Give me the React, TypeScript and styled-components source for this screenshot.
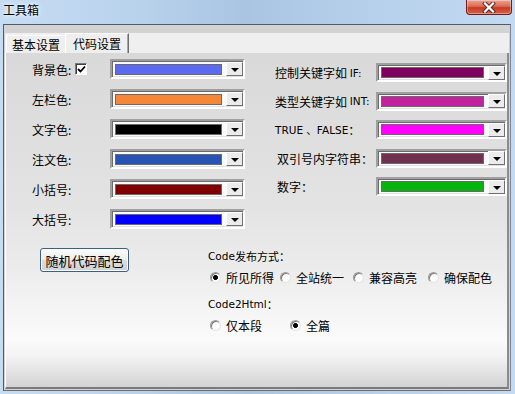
import React from 'react';
import styled, { createGlobalStyle } from 'styled-components';

const GlobalStyle = createGlobalStyle`
  html, body {
    margin: 0;
    padding: 0;
    background: #bcd4ee;
  }
  * {
    box-sizing: border-box;
  }
`;

const cjk = `'Noto Sans CJK SC', 'DejaVu Sans', sans-serif`;
const latin = `'DejaVu Sans', 'Noto Sans CJK SC', sans-serif`;

const Window = styled.div`
  width: 515px;
  height: 394px;
  display: flex;
  flex-direction: column;
  padding: 0 4px 3px 3px;
  background: linear-gradient(90deg, #c6dcf3 0%, #bad3ed 25%, #a9c5e2 48%, #b3cde9 65%, #c3daf2 100%);
  font-family: ${cjk};
  font-size: 12px;
  color: #000;
`;

const TitleBar = styled.div`
  height: 24px;
  flex: none;
  display: flex;
  align-items: flex-start;
  justify-content: space-between;
`;

const Title = styled.span`
  font-size: 12px;
  line-height: 14px;
  margin-top: 3px;
  text-shadow: 0 0 6px #fff, 0 0 3px #fff;
`;

const CloseButton = styled.div`
  width: 46px;
  height: 15px;
  margin-right: -1px;
  border: 1px solid #6b1f17;
  border-top: none;
  border-radius: 0 0 4px 4px;
  background: linear-gradient(#eba493 0%, #dc6b54 45%, #c83a22 55%, #d8604a 100%);
  box-shadow: inset 0 0 0 1px rgba(255, 255, 255, 0.35);
  display: flex;
  align-items: center;
  justify-content: center;
`;

const Client = styled.div`
  flex: 1;
  display: flex;
  flex-direction: column;
  border: 1px solid #4f5b66;
  border-right-color: #7c8793;
  border-bottom-color: #6e6e6e;
  background: #d3d3d3;
  padding: 8px 1px 1px 1px;
`;

const TabStrip = styled.div`
  height: 20px;
  flex: none;
  display: flex;
  align-items: flex-end;
  background: #efefef;
`;

const Tab = styled.div<{ $active?: boolean }>`
  height: ${p => (p.$active ? 20 : 18)}px;
  padding: 0 ${p => (p.$active ? 7 : 5)}px;
  margin-left: ${p => (p.$active ? -1 : 1)}px;
  display: flex;
  align-items: center;
  font-size: 12px;
  background: #efefef;
  border-top: 1px solid #fff;
  border-left: 1px solid #fff;
  border-right: 1px solid ${p => (p.$active ? '#6e6e6e' : '#a0a0a0')};
  box-shadow: ${p => (p.$active ? 'inset -1px 0 0 #a8a8a8' : 'none')};
  position: relative;
  z-index: ${p => (p.$active ? 1 : 0)};
`;

const Panel = styled.div`
  flex: 1;
  display: flex;
  flex-direction: column;
  border-left: 1px solid #fff;
  border-right: 2px solid #8c8c8c;
  border-bottom: 2px solid #7a7a7a;
  background: linear-gradient(#d9d9d9 0%, #e3e3e3 45%, #ececec 65%, #fbfbfb 86%, #f2f2f2 91%, #d3d3d3 100%);
  padding-top: 6px;
`;

const TopSection = styled.div`
  display: flex;
  align-items: flex-start;
`;

const LeftColumn = styled.div`
  display: flex;
  flex-direction: column;
  gap: 10px;
  padding-left: 26px;
  width: 270px;
`;

const RightColumn = styled.div`
  display: flex;
  flex-direction: column;
  gap: 9.5px;
  padding-top: 4px;
`;

const Row = styled.div<{ $h: number }>`
  height: ${p => p.$h}px;
  display: flex;
  align-items: center;
`;

const Label = styled.div<{ $w: number; $indent?: number }>`
  width: ${p => p.$w}px;
  padding-left: ${p => p.$indent ?? 0}px;
  display: flex;
  align-items: center;
  white-space: pre;
  font-size: 12px;
`;

const Latin = styled.span`
  font-family: ${latin};
  font-size: 10.5px;
`;

const CheckBox = styled.span`
  width: 12px;
  height: 12px;
  margin-left: 4px;
  border: 1px solid;
  border-color: #7a7a7a #fff #fff #7a7a7a;
  box-shadow: inset 1px 1px 0 #404040;
  background: #fff;
  display: flex;
  align-items: center;
  justify-content: center;
`;

const Select = styled.div<{ $w: number; $h: number }>`
  width: ${p => p.$w}px;
  height: ${p => p.$h}px;
  display: flex;
  align-items: center;
  gap: 4px;
  padding: 0 0 0 3px;
  border: 2px solid;
  border-color: #a0a0a0 #fff #fff #a0a0a0;
  box-shadow: inset 1px 1px 0 #6b6b6b, inset -1px -1px 0 #e0e0e0;
  background: #fbfbfb;
`;

const Swatch = styled.div<{ $c: string }>`
  flex: 1;
  height: 11px;
  background: ${p => p.$c};
  border: 1px solid #6a6a6a;
`;

const ArrowButton = styled.div`
  width: 17px;
  height: 14px;
  flex: none;
  background: #ececec;
  border: 1px solid;
  border-color: #fff #707070 #707070 #fff;
  display: flex;
  align-items: center;
  justify-content: center;
  padding-top: 2px;
`;

const Arrow = styled.span`
  width: 0;
  height: 0;
  border-left: 4px solid transparent;
  border-right: 4px solid transparent;
  border-top: 4px solid #000;
`;

const BottomSection = styled.div`
  display: flex;
  align-items: flex-start;
  margin-top: 18px;
`;

const ButtonCell = styled.div`
  width: 202px;
  padding-left: 34px;
  padding-top: 1px;
`;

const PushButton = styled.div`
  width: 89px;
  height: 24px;
  display: flex;
  align-items: center;
  justify-content: center;
  font-size: 13px;
  border: 1px solid #3c5f84;
  border-radius: 3px;
  background: linear-gradient(#fbfbfb 0%, #ededed 48%, #dcdcdc 52%, #d2d2d2 100%);
  box-shadow: inset 0 0 0 1px #fcfcfc;
`;

const Options = styled.div`
  display: flex;
  flex-direction: column;
`;

const GroupTitle = styled.div`
  height: 14px;
  display: flex;
  align-items: center;
  font-size: 11px;
  margin-top: 2px;
  white-space: nowrap;
`;

const RadioRow = styled.div`
  display: flex;
  align-items: center;
  height: 16px;
  margin: 6px 0 10px 2px;
`;

const RadioItem = styled.div<{ $w?: number }>`
  width: ${p => (p.$w ? `${p.$w}px` : 'auto')};
  display: flex;
  align-items: center;
  gap: 5px;
  white-space: nowrap;
  font-size: 12px;
`;

const RadioDot = styled.span<{ $on?: boolean }>`
  width: 11px;
  height: 11px;
  border-radius: 50%;
  flex: none;
  border: 1px solid #9a9a9a;
  border-bottom-color: #e6e6e6;
  border-right-color: #e6e6e6;
  background: radial-gradient(circle, ${p => (p.$on ? '#000 0 2.2px,' : '')} #fff 2.4px, #f4f4f4 100%);
  box-shadow: inset 1px 1px 0 #7c7c7c;
`;

const leftRows = [
  { label: '背景色:', color: '#5b6aee', check: true },
  { label: '左栏色:', color: '#f58838' },
  { label: '文字色:', color: '#000000' },
  { label: '注文色:', color: '#2753b5' },
  { label: '小括号:', color: '#800000' },
  { label: '大括号:', color: '#0000ff' },
];

const rightRows: { label: React.ReactNode; color: string; indent?: number }[] = [
  { label: <>控制关键字如 <Latin>IF:</Latin></>, color: '#800060' },
  { label: <>类型关键字如 <Latin>INT:</Latin></>, color: '#c2229c' },
  { label: <><Latin>TRUE 、FALSE</Latin>：</>, color: '#ff00ff' },
  { label: '双引号内字符串：', color: '#71304f', indent: 2 },
  { label: '数字：', color: '#06b40d', indent: 2 },
];

const ColorSelect = ({ color, w, h }: { color: string; w: number; h: number }) => (
  <Select $w={w} $h={h}>
    <Swatch $c={color} />
    <ArrowButton>
      <Arrow />
    </ArrowButton>
  </Select>
);

const App = () => (
  <>
    <GlobalStyle />
    <Window>
      <TitleBar>
        <Title>工具箱</Title>
        <CloseButton>
          <svg width="14" height="11" viewBox="0 0 14 11">
            <path d="M3 1.5 L11 9.5 M11 1.5 L3 9.5" stroke="#4a2a25" strokeWidth="4" strokeLinecap="square" />
            <path d="M3 1.5 L11 9.5 M11 1.5 L3 9.5" stroke="#fff" strokeWidth="2.2" strokeLinecap="square" />
          </svg>
        </CloseButton>
      </TitleBar>
      <Client>
        <TabStrip>
          <Tab>基本设置</Tab>
          <Tab $active>代码设置</Tab>
        </TabStrip>
        <Panel>
          <TopSection>
            <LeftColumn>
              {leftRows.map(r => (
                <Row key={r.label} $h={20}>
                  <Label $w={78}>
                    {r.label}
                    {r.check && (
                      <CheckBox>
                        <svg width="9" height="9" viewBox="0 0 9 9">
                          <path d="M1 4 L3.5 6.5 L8 1.5" stroke="#000" strokeWidth="1.8" fill="none" />
                        </svg>
                      </CheckBox>
                    )}
                  </Label>
                  <ColorSelect color={r.color} w={135} h={20} />
                </Row>
              ))}
            </LeftColumn>
            <RightColumn>
              {rightRows.map((r, i) => (
                <Row key={i} $h={19}>
                  <Label $w={101} $indent={r.indent}>{r.label}</Label>
                  <ColorSelect color={r.color} w={131} h={19} />
                </Row>
              ))}
            </RightColumn>
          </TopSection>
          <BottomSection>
            <ButtonCell>
              <PushButton>随机代码配色</PushButton>
            </ButtonCell>
            <Options>
              <GroupTitle><Latin>Code</Latin>发布方式：</GroupTitle>
              <RadioRow>
                <RadioItem $w={70}><RadioDot $on />所见所得</RadioItem>
                <RadioItem $w={73}><RadioDot />全站统一</RadioItem>
                <RadioItem $w={75}><RadioDot />兼容高亮</RadioItem>
                <RadioItem><RadioDot />确保配色</RadioItem>
              </RadioRow>
              <GroupTitle><Latin>Code2Html</Latin>：</GroupTitle>
              <RadioRow>
                <RadioItem $w={80}><RadioDot />仅本段</RadioItem>
                <RadioItem><RadioDot $on />全篇</RadioItem>
              </RadioRow>
            </Options>
          </BottomSection>
        </Panel>
      </Client>
    </Window>
  </>
);

export default App;
